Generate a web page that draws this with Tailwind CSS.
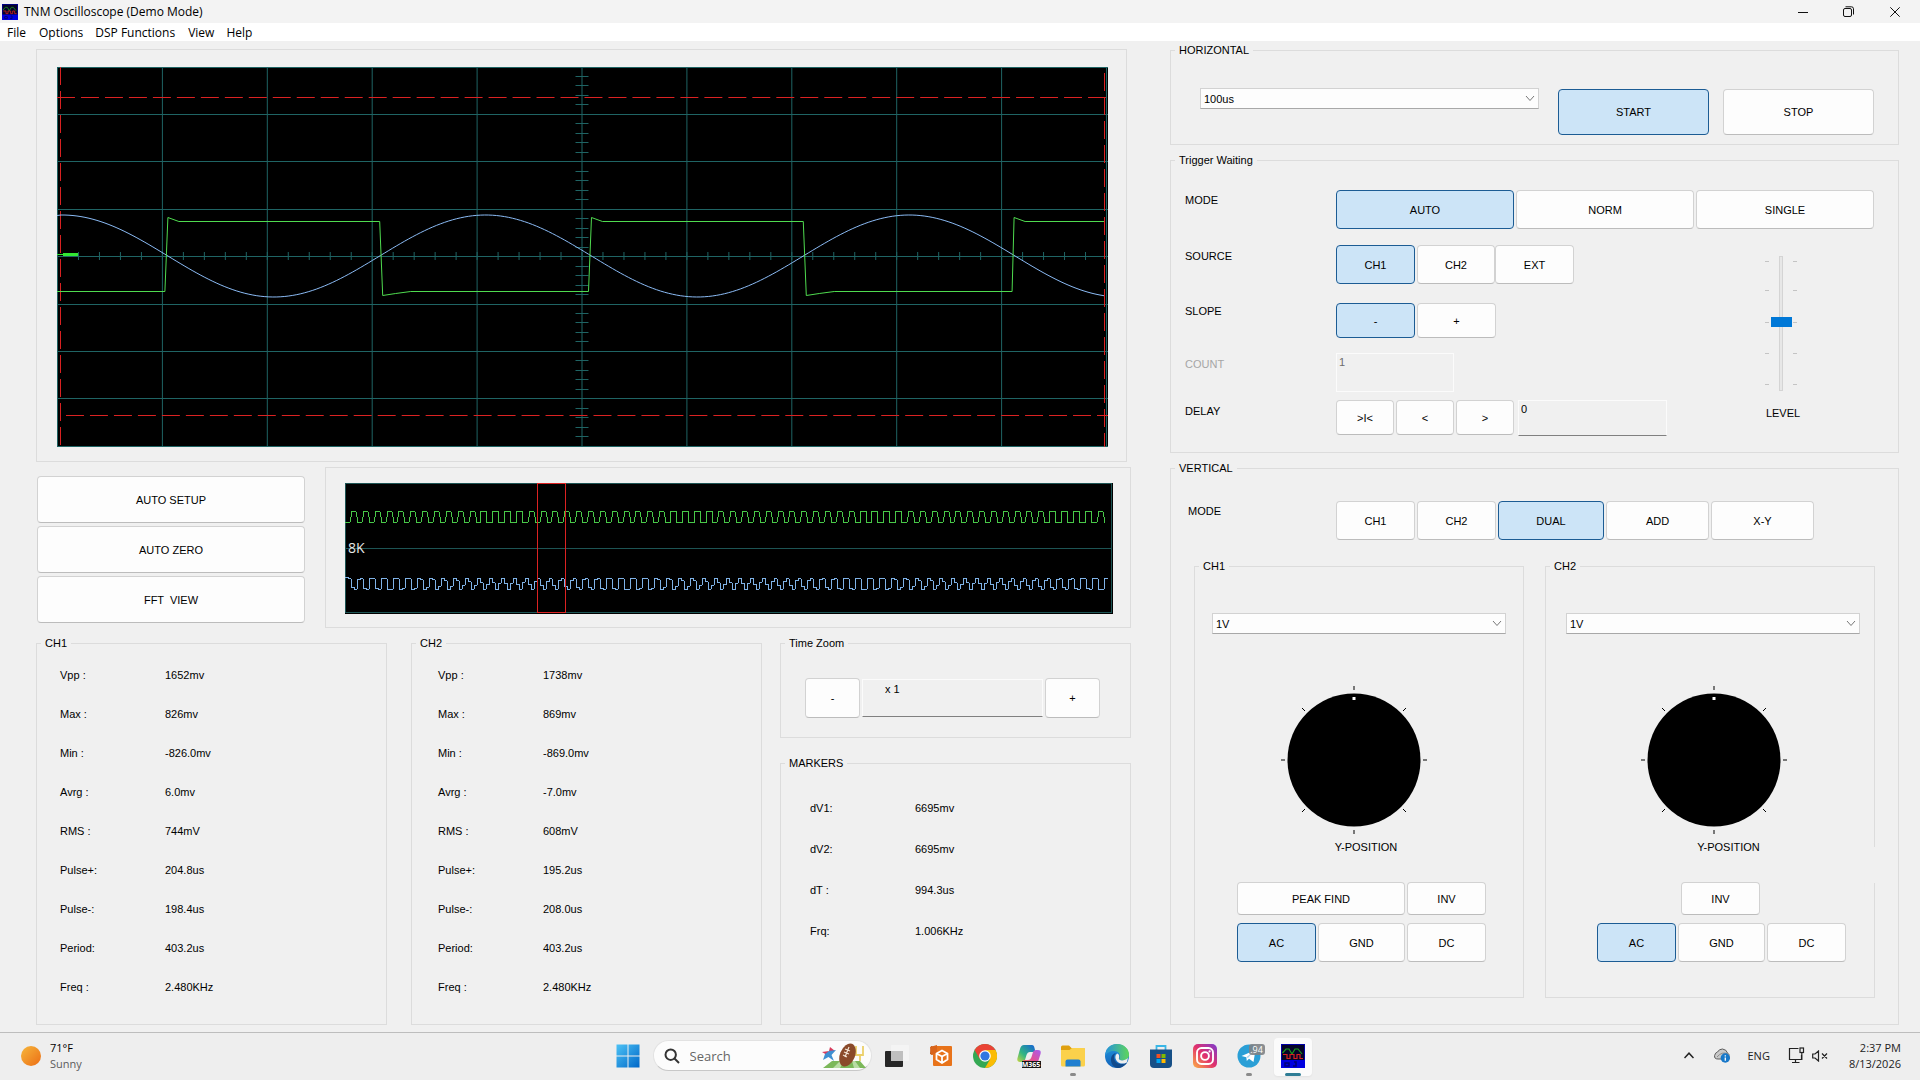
<!DOCTYPE html>
<html lang="en">
<head>
    <meta charset="UTF-8">
    <meta name="viewport" content="width=device-width, initial-scale=1.0">
    <title>TNM Oscilloscope (Demo Mode)</title>
    <!-- Tailwind CSS -->
    <script src="https://cdn.jsdelivr.net/npm/@tailwindcss/browser@4"></script>
</head>
<body class="min-h-screen flex flex-col bg-[#f0f0f0] text-black text-[11px] leading-4 font-['Liberation_Sans',Arial,sans-serif]">

    <!-- Title bar -->
    <header class="h-[23px] shrink-0 flex items-center justify-between bg-[#f3f3f3] px-[2px] font-['Open_Sans',sans-serif]">
        <div class="flex items-center gap-[6px]">
            <svg class="w-4 h-4" viewBox="0 0 24 24"><use href="#scope-logo"/></svg>
            <h1 class="text-[12px]">TNM Oscilloscope (Demo Mode)</h1>
        </div>
        <div class="flex h-full">
            <button aria-label="Minimize" class="w-[46px] flex items-center justify-center">
                <svg class="w-[10px] h-[10px]" viewBox="0 0 10 10" fill="none" stroke="#111"><path d="M0 5.5H10"/></svg>
            </button>
            <button aria-label="Restore" class="w-[45px] flex items-center justify-center">
                <svg class="w-[11px] h-[11px]" viewBox="0 0 11 11" fill="none" stroke="#111"><rect x=".5" y="2.5" width="8" height="8" rx="1.5"/><path d="M2.5 .8H8.5a2 2 0 0 1 2 2V8.5"/></svg>
            </button>
            <button aria-label="Close" class="w-[47px] flex items-center justify-center">
                <svg class="w-[10px] h-[10px]" viewBox="0 0 10 10" fill="none" stroke="#111"><path d="M.3 .3L9.7 9.7M9.7 .3L.3 9.7"/></svg>
            </button>
        </div>
    </header>

    <!-- Menu -->
    <nav class="h-[18px] shrink-0 flex items-end bg-white pl-[7px] text-[12px] font-['Open_Sans',sans-serif]">
        <button class="pr-[13px]">File</button>
        <button class="pr-3">Options</button>
        <button class="pr-[13px]">DSP Functions</button>
        <button class="pr-3">View</button>
        <button>Help</button>
    </nav>

    <main class="flex-1 flex gap-[39px] pl-9 pr-[21px] pb-[7px]">

        <!-- Left side: screens and measurements -->
        <section class="flex-[1095] min-w-0 flex flex-col">
            <div class="mt-2 mr-1 border border-[#dcdcdc] pt-[17px] pb-[14px] pl-5 pr-[18px]">
                <svg id="screen" class="block w-full h-[380px] bg-black" viewBox="0 0 1052 380" preserveAspectRatio="none" fill="none" shape-rendering="crispEdges">
                    <g id="grid" stroke="#1f6464"></g>
                    <g stroke="#dc2222" stroke-dasharray="18 6">
                        <path d="M0 30.5H1052M9 348.5H1052M3.5 0V380M1048.5 6V380"/>
                    </g>
                    <path id="sine" stroke="#8cbcf6"/>
                    <path id="square" stroke="#4fdc4f"/>
                    <path d="M0 187.5H8" stroke="#32e632"/>
                    <path d="M6 187.5H21" stroke="#32e632" stroke-width="3"/>
                </svg>
            </div>

            <div class="mt-[5px] grid grid-cols-[269fr_806fr] gap-5">
                <div class="pt-[9px] pl-px flex flex-col gap-[3px]">
                    <button class="h-[47px] rounded border border-[#d2d2d2] border-b-[#bcbcbc] bg-[#fdfdfd]">AUTO SETUP</button>
                    <button class="h-[47px] rounded border border-[#d2d2d2] border-b-[#bcbcbc] bg-[#fdfdfd]">AUTO ZERO</button>
                    <button class="h-[47px] rounded border border-[#d2d2d2] border-b-[#bcbcbc] bg-[#fdfdfd] whitespace-pre">FFT  VIEW</button>
                </div>
                <div class="border border-[#dcdcdc] pt-[15px] pb-[13px] pl-[19px] pr-[17px]">
                    <div class="relative">
                        <svg class="block w-full h-[131px] bg-black" viewBox="0 0 768 131" preserveAspectRatio="none" fill="none" shape-rendering="crispEdges">
                            <path d="M.5 .5H766.5V129.5H.5ZM0 65.5H766" stroke="#1d5454"/>
                            <path id="overview1" stroke="#48c848"/>
                            <path id="overview2" stroke="#7fb2e6"/>
                            <path d="M192.5 .5H220V129.5H192.5Z" stroke="#dc2222"/>
                        </svg>
                        <span class="absolute left-[3px] top-[57px] text-[14px] text-[#e6e6e6] font-['Open_Sans',sans-serif]">8K</span>
                    </div>
                </div>
            </div>

            <div class="mt-[7px] flex-1 grid grid-cols-[375fr_369fr_351fr]">
                <fieldset class="mr-6 border border-[#dcdcdc] pl-[23px]">
                    <legend class="ml-[-19px] px-1">CH1</legend>
                    <table class="mt-1 text-left">
                        <tr class="h-[39px]"><th class="w-[105px] font-normal">Vpp :</th><td>1652mv</td></tr>
                        <tr class="h-[39px]"><th class="font-normal">Max :</th><td>826mv</td></tr>
                        <tr class="h-[39px]"><th class="font-normal">Min :</th><td>-826.0mv</td></tr>
                        <tr class="h-[39px]"><th class="font-normal">Avrg :</th><td>6.0mv</td></tr>
                        <tr class="h-[39px]"><th class="font-normal">RMS :</th><td>744mV</td></tr>
                        <tr class="h-[39px]"><th class="font-normal">Pulse+:</th><td>204.8us</td></tr>
                        <tr class="h-[39px]"><th class="font-normal">Pulse-:</th><td>198.4us</td></tr>
                        <tr class="h-[39px]"><th class="font-normal">Period:</th><td>403.2us</td></tr>
                        <tr class="h-[39px]"><th class="font-normal">Freq :</th><td>2.480KHz</td></tr>
                    </table>
                </fieldset>
                <fieldset class="mr-[18px] border border-[#dcdcdc] pl-[26px]">
                    <legend class="ml-[-22px] px-1">CH2</legend>
                    <table class="mt-1 text-left">
                        <tr class="h-[39px]"><th class="w-[105px] font-normal">Vpp :</th><td>1738mv</td></tr>
                        <tr class="h-[39px]"><th class="font-normal">Max :</th><td>869mv</td></tr>
                        <tr class="h-[39px]"><th class="font-normal">Min :</th><td>-869.0mv</td></tr>
                        <tr class="h-[39px]"><th class="font-normal">Avrg :</th><td>-7.0mv</td></tr>
                        <tr class="h-[39px]"><th class="font-normal">RMS :</th><td>608mV</td></tr>
                        <tr class="h-[39px]"><th class="font-normal">Pulse+:</th><td>195.2us</td></tr>
                        <tr class="h-[39px]"><th class="font-normal">Pulse-:</th><td>208.0us</td></tr>
                        <tr class="h-[39px]"><th class="font-normal">Period:</th><td>403.2us</td></tr>
                        <tr class="h-[39px]"><th class="font-normal">Freq :</th><td>2.480KHz</td></tr>
                    </table>
                </fieldset>
                <div class="flex flex-col gap-[17px]">
                    <fieldset class="border border-[#dcdcdc] pl-6 pr-[30px] pb-[19px]">
                        <legend class="ml-[-20px] px-1">Time Zoom</legend>
                        <div class="mt-[27px] flex items-center gap-[2px]">
                            <button class="w-[55px] h-10 rounded border border-[#d2d2d2] border-b-[#bcbcbc] bg-[#fdfdfd]">-</button>
                            <input aria-label="Time Zoom" value="x 1" readonly class="flex-1 min-w-0 h-[38px] pl-[22px] pb-[18px] border border-[#fbfbfb] border-b-[#808080]">
                            <button class="w-[55px] h-10 rounded border border-[#d2d2d2] border-b-[#bcbcbc] bg-[#fdfdfd]">+</button>
                        </div>
                    </fieldset>
                    <fieldset class="flex-1 border border-[#dcdcdc] pl-[29px]">
                        <legend class="ml-[-25px] px-1">MARKERS</legend>
                        <table class="mt-4 text-left">
                            <tr class="h-[41px]"><th class="w-[105px] font-normal">dV1:</th><td>6695mv</td></tr>
                            <tr class="h-[41px]"><th class="font-normal">dV2:</th><td>6695mv</td></tr>
                            <tr class="h-[41px]"><th class="font-normal">dT :</th><td>994.3us</td></tr>
                            <tr class="h-[41px]"><th class="font-normal">Frq:</th><td>1.006KHz</td></tr>
                        </table>
                    </fieldset>
                </div>
            </div>
        </section>

        <!-- Right side: controls -->
        <section class="flex-[729] min-w-0 flex flex-col gap-[7px] pt-px">

            <fieldset class="border border-[#dcdcdc] pl-[29px] pr-6 pb-[9px]">
                <legend class="ml-[-25px] px-1">HORIZONTAL</legend>
                <div class="mt-[30px] flex items-start">
                    <div class="relative flex-1 mr-[19px]">
                        <select aria-label="Time base" class="block w-full h-[21px] pl-[3px] appearance-none border border-[#d2d2d2] border-b-[#a8a8a8] bg-[#fdfdfd]"><option>100us</option></select>
                        <svg class="absolute right-1 top-[7px] w-[10px] h-[7px] pointer-events-none" viewBox="0 0 10 7" fill="none" stroke="#777"><path d="M1 1L5 5.5L9 1"/></svg>
                    </div>
                    <button class="mt-px w-[151px] h-[46px] rounded border border-[#1c5c94] bg-[#cce4f7] mr-[14px]">START</button>
                    <button class="mt-px w-[151px] h-[46px] rounded border border-[#d2d2d2] border-b-[#bcbcbc] bg-[#fdfdfd]">STOP</button>
                </div>
            </fieldset>

            <fieldset class="border border-[#dcdcdc] pl-[14px] pr-6 pb-4">
                <legend class="ml-[-10px] px-1">Trigger Waiting</legend>
                <div class="mt-[22px] flex">
                    <span class="w-[151px] pt-[2px]">MODE</span>
                    <div class="flex-1 flex gap-[2px]">
                        <button class="flex-1 h-[39px] rounded border border-[#1c5c94] bg-[#cce4f7]">AUTO</button>
                        <button class="flex-1 h-[39px] rounded border border-[#d2d2d2] border-b-[#bcbcbc] bg-[#fdfdfd]">NORM</button>
                        <button class="flex-1 h-[39px] rounded border border-[#d2d2d2] border-b-[#bcbcbc] bg-[#fdfdfd]">SINGLE</button>
                    </div>
                </div>
                <div class="flex justify-between">
                    <div class="mt-4">
                        <div class="flex">
                            <span class="w-[151px] pt-[3px]">SOURCE</span>
                            <button class="w-[79px] h-[39px] rounded border border-[#1c5c94] bg-[#cce4f7] mr-[2px]">CH1</button>
                            <button class="w-[78px] h-[39px] rounded border border-[#d2d2d2] border-b-[#bcbcbc] bg-[#fdfdfd]">CH2</button>
                            <button class="w-[79px] h-[39px] rounded border border-[#d2d2d2] border-b-[#bcbcbc] bg-[#fdfdfd]">EXT</button>
                        </div>
                        <div class="mt-[19px] flex">
                            <span class="w-[151px]">SLOPE</span>
                            <button class="w-[79px] h-[35px] rounded border border-[#1c5c94] bg-[#cce4f7] mr-[2px]">-</button>
                            <button class="w-[79px] h-[35px] rounded border border-[#d2d2d2] border-b-[#bcbcbc] bg-[#fdfdfd]">+</button>
                        </div>
                        <div class="mt-[15px] flex text-[#a6a6a6]">
                            <label for="count" class="w-[151px] pt-[3px]">COUNT</label>
                            <input id="count" value="1" disabled class="w-[118px] h-[39px] pl-[2px] pb-[21px] border border-[#fbfbfb] text-[#6d6d6d]">
                        </div>
                        <div class="mt-2 flex">
                            <label for="delay" class="w-[151px] pt-[3px]">DELAY</label>
                            <button class="w-[58px] h-[35px] rounded border border-[#d2d2d2] border-b-[#bcbcbc] bg-[#fdfdfd] mr-[2px]">&gt;I&lt;</button>
                            <button class="w-[58px] h-[35px] rounded border border-[#d2d2d2] border-b-[#bcbcbc] bg-[#fdfdfd] mr-[2px]">&lt;</button>
                            <button class="w-[58px] h-[35px] rounded border border-[#d2d2d2] border-b-[#bcbcbc] bg-[#fdfdfd] mr-1">&gt;</button>
                            <input id="delay" value="0" readonly class="w-[149px] h-9 pl-[2px] pb-[18px] border border-[#fbfbfb] border-b-[#808080]">
                        </div>
                    </div>
                    <!-- Level slider with scale on both sides -->
                    <div class="mt-[27px] mr-[75px] w-9 flex flex-col items-center gap-[14px]">
                        <div class="relative w-9 h-[135px] flex justify-center">
                            <svg class="absolute inset-0 w-9 h-[135px]" viewBox="0 0 36 135" fill="none" shape-rendering="crispEdges">
                                <rect x="16.5" y=".5" width="3" height="134" fill="#e7e7e7" stroke="#d4d4d4"/>
                                <path d="M2 5.5H6M30 5.5H34M2 34.5H6M30 34.5H34M2 66.5H6M30 66.5H34M2 97.5H6M30 97.5H34M2 128.5H6M30 128.5H34" stroke="#c4c4c4"/>
                            </svg>
                            <input id="level" type="range" min="0" max="100" value="51" class="relative w-[21px] h-[135px] appearance-none bg-transparent [writing-mode:vertical-lr] [direction:rtl] [&::-webkit-slider-thumb]:appearance-none [&::-webkit-slider-thumb]:w-[21px] [&::-webkit-slider-thumb]:h-[10px] [&::-webkit-slider-thumb]:bg-[#0078d7]">
                        </div>
                        <label for="level" class="pl-1">LEVEL</label>
                    </div>
                </div>
            </fieldset>

            <fieldset class="flex-1 flex flex-col border border-[#dcdcdc] px-[23px] pb-[26px]">
                <legend class="ml-[-19px] px-1">VERTICAL</legend>
                <div class="mt-[25px] ml-[-6px] flex">
                    <span class="w-[148px] pt-[2px]">MODE</span>
                    <button class="w-[79px] h-[39px] rounded border border-[#d2d2d2] border-b-[#bcbcbc] bg-[#fdfdfd] mr-[2px]">CH1</button>
                    <button class="w-[79px] h-[39px] rounded border border-[#d2d2d2] border-b-[#bcbcbc] bg-[#fdfdfd] mr-[2px]">CH2</button>
                    <button class="w-[106px] h-[39px] rounded border border-[#1c5c94] bg-[#cce4f7] mr-[2px]">DUAL</button>
                    <button class="w-[103px] h-[39px] rounded border border-[#d2d2d2] border-b-[#bcbcbc] bg-[#fdfdfd] mr-[2px]">ADD</button>
                    <button class="w-[103px] h-[39px] rounded border border-[#d2d2d2] border-b-[#bcbcbc] bg-[#fdfdfd]">X-Y</button>
                </div>

                <div class="mt-[18px] flex-1 grid grid-cols-2 gap-[21px]">
                    <fieldset class="border border-[#dcdcdc] px-[17px]">
                        <legend class="ml-[-13px] px-1">CH1</legend>
                        <div class="relative mt-[39px]">
                            <select aria-label="CH1 volts per division" class="block w-full h-[21px] pl-[3px] appearance-none border border-[#d2d2d2] border-b-[#a8a8a8] bg-[#fdfdfd]"><option>1V</option></select>
                            <svg class="absolute right-1 top-[7px] w-[10px] h-[7px] pointer-events-none" viewBox="0 0 10 7" fill="none" stroke="#777"><path d="M1 1L5 5.5L9 1"/></svg>
                        </div>
                        <div class="mt-[52px] ml-[25px] w-[249px]">
                            <svg class="block ml-[43px] w-[148px] h-[148px]" viewBox="0 0 148 148"><use href="#knob"/></svg>
                            <p class="pt-[5px] pl-[9px] text-center">Y-POSITION</p>
                            <div class="mt-[27px] flex gap-[2px]">
                                <button class="flex-1 h-[33px] rounded border border-[#d2d2d2] border-b-[#bcbcbc] bg-[#fdfdfd]">PEAK FIND</button>
                                <button class="w-[79px] h-[33px] rounded border border-[#d2d2d2] border-b-[#bcbcbc] bg-[#fdfdfd]">INV</button>
                            </div>
                            <div class="mt-2 flex gap-[2px]">
                                <button class="w-[79px] h-[39px] rounded border border-[#1c5c94] bg-[#cce4f7]">AC</button>
                                <button class="flex-1 h-[39px] rounded border border-[#d2d2d2] border-b-[#bcbcbc] bg-[#fdfdfd]">GND</button>
                                <button class="w-[79px] h-[39px] rounded border border-[#d2d2d2] border-b-[#bcbcbc] bg-[#fdfdfd]">DC</button>
                            </div>
                        </div>
                    </fieldset>
                    <fieldset class="relative border border-[#dcdcdc] pl-5 pr-[14px]">
                        <legend class="ml-[-16px] px-1">CH2</legend>
                        <span class="absolute right-[-1px] top-[273px] w-px h-9 bg-[#f0f0f0]"></span>
                        <div class="relative mt-[39px]">
                            <select aria-label="CH2 volts per division" class="block w-full h-[21px] pl-[3px] appearance-none border border-[#d2d2d2] border-b-[#a8a8a8] bg-[#fdfdfd]"><option>1V</option></select>
                            <svg class="absolute right-1 top-[7px] w-[10px] h-[7px] pointer-events-none" viewBox="0 0 10 7" fill="none" stroke="#777"><path d="M1 1L5 5.5L9 1"/></svg>
                        </div>
                        <div class="mt-[52px] ml-[31px] w-[249px]">
                            <svg class="block ml-[43px] w-[148px] h-[148px]" viewBox="0 0 148 148"><use href="#knob"/></svg>
                            <p class="pt-[5px] pl-[14px] text-center">Y-POSITION</p>
                            <button class="mt-[27px] ml-[84px] w-[79px] h-[33px] block rounded border border-[#d2d2d2] border-b-[#bcbcbc] bg-[#fdfdfd]">INV</button>
                            <div class="mt-2 flex gap-[2px]">
                                <button class="w-[79px] h-[39px] rounded border border-[#1c5c94] bg-[#cce4f7]">AC</button>
                                <button class="flex-1 h-[39px] rounded border border-[#d2d2d2] border-b-[#bcbcbc] bg-[#fdfdfd]">GND</button>
                                <button class="w-[79px] h-[39px] rounded border border-[#d2d2d2] border-b-[#bcbcbc] bg-[#fdfdfd]">DC</button>
                            </div>
                        </div>
                    </fieldset>
                </div>
            </fieldset>
        </section>
    </main>

    <!-- Taskbar -->
    <footer class="h-12 shrink-0 grid grid-cols-[1fr_auto_1fr] items-center border-t border-[#bdbdbd] bg-[#eeeeee] pb-[2px] font-['Open_Sans',sans-serif]">
        <button class="flex items-center gap-[9px] pl-[21px] text-left">
            <svg class="w-5 h-5" viewBox="0 0 20 20"><circle cx="10" cy="10" r="10" fill="url(#sun)"/></svg>
            <span>71°F<br><span class="text-[#5c5c5c]">Sunny</span></span>
        </button>

        <div class="flex items-center">
            <button aria-label="Start" class="w-11 h-11 flex items-center justify-center">
                <svg class="w-6 h-6" viewBox="0 0 24 24" fill="url(#win)"><path d="M.5 .5H11.5V11.5H.5ZM12.5 .5H23.5V11.5H12.5ZM.5 12.5H11.5V23.5H.5ZM12.5 12.5H23.5V23.5H12.5Z"/></svg>
            </button>
            <div class="mx-[3px] w-[219px] h-[31px] flex items-center rounded-full border border-[#e2e2e2] border-b-[#c8c8c8] bg-[#fcfcfc] pl-[10px] pr-1">
                <svg class="w-4 h-4 shrink-0" viewBox="0 0 16 16" fill="none" stroke="#333" stroke-width="2"><circle cx="6.7" cy="6.7" r="5.2"/><path d="M10.5 10.5L15 15"/></svg>
                <input type="search" aria-label="Search" placeholder="Search" class="ml-[10px] flex-1 min-w-0 text-[13px] placeholder:text-[#666] outline-none">
                <svg class="w-12 h-[27px] shrink-0" viewBox="0 0 48 27">
                    <path d="M4 26L13 19H41L47 26Z" fill="#7cb85a"/>
                    <path d="M14 26L21 19H25L21 26ZM35 26L33 19H36L41 26Z" fill="#b9dca4"/>
                    <path d="M41 19V13M37 4V13H44V4" fill="none" stroke="#ecd06a" stroke-width="1.8"/>
                    <path d="M8 2L10 9L3 10L8 13L10 9L16 9L11 5L10 9Z" fill="#d63b5c"/>
                    <path d="M10 9L17 8L12.5 13L15 19L9.5 15L4 18L6 12Z" fill="#3f8fd2"/>
                    <ellipse cx="28.5" cy="13" rx="7.5" ry="12" fill="#8a4a2a" transform="rotate(22 28.5 13)"/>
                    <path d="M30 5L26 15M26 7L31 9M25 10L30 12M24 13L28 15" fill="none" stroke="#f3e3d3" stroke-width="1.2"/>
                </svg>
            </div>
            <button aria-label="Task view" class="w-11 h-11 flex items-center justify-center">
                <svg class="w-6 h-6" viewBox="0 0 24 24"><rect x="0" y="7" width="18" height="16" rx="1" fill="#272727"/><rect x="6" y="1" width="18" height="16" rx="1" fill="#f4f4f4"/><rect x="6" y="7" width="12" height="10" fill="#bfbfbf"/></svg>
            </button>
            <button aria-label="Package manager" class="w-11 h-11 flex items-center justify-center">
                <svg class="w-6 h-6" viewBox="0 0 24 24"><path d="M2 2L9 4V12L1 10Z" fill="#b5500f"/><rect x="4" y="2" width="19" height="20" rx="1" fill="#e8731a"/><path d="M1 3L8 1V9L2 11Z" fill="#d9641a"/><path d="M13 6.5L18.5 9.5V15.5L13 19L7.500 15.5V9.5ZM7.500 9.5L13 12.500L18.5 9.5M13 12.500V19" fill="none" stroke="#fff" stroke-width="1.800" stroke-linejoin="round"/></svg>
            </button>
            <button aria-label="Chrome" class="w-11 h-11 flex items-center justify-center">
                <svg class="w-6 h-6" viewBox="0 0 24 24"><circle cx="12" cy="12" r="12" fill="#34a853"/><path d="M12 12L1.6 6A12 12 0 0 1 22.4 6Z" fill="#ea4335"/><path d="M12 6H22.4A12 12 0 0 1 12 24L17.2 15Z" fill="#fbbc05"/><path d="M1.6 6L6.8 15L12 6Z" fill="#ea4335"/><circle cx="12" cy="12" r="5.8" fill="#fff"/><circle cx="12" cy="12" r="4.6" fill="#3277e0"/></svg>
            </button>
            <button aria-label="Microsoft 365 Copilot" class="relative w-11 h-11 flex items-center justify-center">
                <svg class="w-6 h-6" viewBox="0 0 24 24"><path d="M7 1H15Q17 1 17.5 4L18.5 8H13Q10.5 8 9.5 11L8 16Q7 18 5 18H3Q-.5 18 .5 14L3 5Q4 1 7 1Z" fill="url(#copA)"/><path d="M17 22H9Q7 22 6.5 19L6 16H11Q13.5 16 14.5 13L16 8Q17 6 19 6H21Q24.5 6 23.5 10L21 18Q20 22 17 22Z" fill="url(#copB)"/></svg>
                <span class="absolute left-[15px] top-[27px] w-[19px] h-[7px] bg-[#151515] text-white text-[7px] leading-[7px] font-bold text-center">M365</span>
            </button>
            <button aria-label="File Explorer" class="relative w-11 h-11 flex items-center justify-center">
                <svg class="w-6 h-6" viewBox="0 0 24 24"><path d="M0 3Q0 1.5 1.5 1.5H8L10.5 4H22.5Q24 4 24 5.5V10H0Z" fill="#dfa010"/><path d="M0 6H8.5L11 4H23Q24 4 24 5.5V21Q24 22.5 22.5 22.5H1.5Q0 22.5 0 21Z" fill="#fbd14b"/><path d="M4.5 22.5V17.5Q4.5 15.5 6.5 15.5H17.5Q19.5 15.5 19.5 17.5V22.5Z" fill="#1f7fd0"/></svg>
                <span class="absolute bottom-[2px] w-[6px] h-[3px] rounded-full bg-[#8a8a8a]"></span>
            </button>
            <button aria-label="Edge" class="w-11 h-11 flex items-center justify-center">
                <svg class="w-6 h-6" viewBox="0 0 24 24"><circle cx="12" cy="12" r="12" fill="url(#edgeB)"/><path d="M.3 10.5C1 4 6 0 12 0C19 0 24 5 24 10.5C24 14 21.5 16.5 18 16.5C15 16.5 13.7 15.3 14.5 14C16 11 14 7 9 7C5 7 1.5 9 .3 12Z" fill="url(#edgeA)"/><path d="M11 9C8 11 8 17 13 19.5C16.5 21 20 19.5 22 18.5C20 22 16 24 12.5 24C6 23 4 14 8 10.5C9 9.5 10 9 11 9Z" fill="#114a8b"/><path d="M12.5 9.5C15.5 11 13.5 14.5 14 15C14.5 17 20 17 23 14C22.5 16 22 18 21.5 18.7C15 21.5 9.5 17 10.5 12C10.8 10.8 11.5 10 12.5 9.5Z" fill="#eee"/></svg>
            </button>
            <button aria-label="Microsoft Store" class="w-11 h-11 flex items-center justify-center">
                <svg class="w-6 h-6" viewBox="0 0 24 24"><path d="M7.5 6V2H16.5V6" fill="none" stroke="#39b6e6" stroke-width="1.8"/><path d="M1 5.5H23V20Q23 24 19 24H5Q1 24 1 20Z" fill="#164f86"/><path d="M7.5 10H11.5V14H7.5Z" fill="#f25022"/><path d="M12.5 10H16.5V14H12.5Z" fill="#7fba00"/><path d="M7.5 15H11.5V19H7.5Z" fill="#00a4ef"/><path d="M12.5 15H16.5V19H12.5Z" fill="#ffb900"/></svg>
            </button>
            <button aria-label="Instagram" class="w-11 h-11 flex items-center justify-center">
                <svg class="w-6 h-6" viewBox="0 0 24 24"><rect width="24" height="24" rx="5" fill="url(#insta)"/><g fill="none" stroke="#fff" stroke-width="1.9"><rect x="4" y="4" width="16" height="16" rx="4.5"/><circle cx="12" cy="12" r="3.9"/></g><circle cx="16.6" cy="7.4" r="1.1" fill="#fff"/></svg>
            </button>
            <button aria-label="Telegram" class="relative w-11 h-11 flex items-center justify-center">
                <svg class="w-6 h-6" viewBox="0 0 24 24"><circle cx="12" cy="12" r="11.5" fill="#2a9fd6"/><path d="M4.5 12L18.5 6L16.5 18L12 14.7L9.8 17L9.3 13.2Z" fill="#fff"/><path d="M9.3 13.2L16 8L11 14Z" fill="#a9d4ee"/></svg>
                <span class="absolute left-[22px] top-[10px] w-4 h-[11px] rounded-[3px] bg-[#7d8286]/90 text-white text-[9px] leading-[11px] text-center">.94</span>
                <span class="absolute bottom-[2px] w-[6px] h-[3px] rounded-full bg-[#8a8a8a]"></span>
            </button>
            <button aria-label="TNM Oscilloscope" class="relative w-11 h-11 flex items-center justify-center">
                <span class="absolute inset-x-[3px] top-1 bottom-[2px] rounded bg-[#fbfbfb] shadow-xs"></span>
                <svg class="relative w-6 h-6" viewBox="0 0 24 24"><use href="#scope-logo"/></svg>
                <span class="absolute bottom-[2px] w-4 h-[3px] rounded-full bg-[#2f7d95]"></span>
            </button>
        </div>

        <div class="flex items-center justify-end pr-[19px]">
            <button aria-label="Show hidden icons" class="mr-5">
                <svg class="w-[10px] h-[7px]" viewBox="0 0 10 7" fill="none" stroke="#222" stroke-width="1.5"><path d="M.5 6L5 1.2L9.5 6"/></svg>
            </button>
            <button aria-label="OneDrive" class="mr-[17px]">
                <svg class="block w-4 h-[15px]" viewBox="0 0 16 15"><path d="M4 11Q0 11 .6 7.5Q1.2 4.5 3.5 4Q5 1 8.5 1Q12.5 1.5 13.5 5Q15.5 6 15 9V11Z" fill="#c9c9c9" stroke="#5c5c5c"/><path d="M3 9Q8 3 14 6" fill="none" stroke="#8c8c8c"/><circle cx="11.3" cy="10" r="4.7" fill="#1878c9"/><path d="M11.3 9.5V12.7M11.3 7.3V8.5" stroke="#fff" stroke-width="1.3"/></svg>
            </button>
            <button class="mr-[18px] text-[#222]">ENG</button>
            <button aria-label="Network and volume" class="mr-[21px] flex items-center gap-[7px]">
                <svg class="w-[17px] h-[17px]" viewBox="0 0 17 17" fill="none" stroke="#222" stroke-width="1.2"><path d="M10.5 1.5H1.5V12.5H13.5V8M7.5 12.5V15.5M4 15.5H11.5"/><rect x="12" y="1" width="3.5" height="4.5"/><path d="M13.8 5.5V13"/></svg>
                <svg class="w-4 h-3" viewBox="0 0 16 12" fill="none" stroke="#222" stroke-width="1.2"><path d="M.7 4H3L6.5 1V11L3 8H.7ZM10 3.5L15 8.5M15 3.5L10 8.5"/></svg>
            </button>
            <time class="text-right text-[#222]">2:37 PM<br>8/13/2026</time>
        </div>
    </footer>

    <!-- Shared drawings and gradients -->
    <svg class="absolute w-0 h-0" aria-hidden="true">
        <defs>
            <symbol id="scope-logo" viewBox="0 0 24 24">
                <rect width="24" height="24" fill="#0000a8"/>
                <rect x="1" y="1" width="22" height="15" fill="#050528"/>
                <path d="M1.5 9L5 5H8L11 10L14 5H17L21 10" fill="none" stroke="#1c9a1c" stroke-width="1.2"/>
                <path d="M2 10.5H6V14.5H9V10.5H13V14.5H16V10.5H19V14.5H22" fill="none" stroke="#d82020" stroke-width="1.2"/>
                <rect x="0" y="16" width="24" height="8" fill="#0000e0"/>
                <path d="M4 19H8V22H4ZM13 18H15V22H12" fill="none" stroke="#000078" stroke-width="1.5"/>
            </symbol>
            <symbol id="knob" viewBox="0 0 148 148">
                <circle cx="74" cy="74" r="66.5"/>
                <rect x="72.5" y="11" width="3" height="3" fill="#fff"/>
                <path d="M74 0V4M74 144V148M1 74H5M143 74H147M22 22L25 25M126 22L123 25M22 126L25 123M126 126L123 123" stroke="#000"/>
            </symbol>
            <linearGradient id="sun" x1="0" y1="0" x2="1" y2="1"><stop offset="0" stop-color="#f6b73c"/><stop offset="1" stop-color="#ec6d14"/></linearGradient>
            <linearGradient id="win" x1="0" y1="0" x2="1" y2="1"><stop offset="0" stop-color="#4cc2f5"/><stop offset="1" stop-color="#0067c8"/></linearGradient>
            <linearGradient id="copA" x1="0" y1="1" x2="1" y2="0"><stop offset="0" stop-color="#c9d640"/><stop offset=".4" stop-color="#2fb583"/><stop offset="1" stop-color="#1560d8"/></linearGradient>
            <linearGradient id="copB" x1="0" y1="1" x2="1" y2="0"><stop offset="0" stop-color="#f0874a"/><stop offset=".5" stop-color="#e04f9a"/><stop offset="1" stop-color="#a65cf0"/></linearGradient>
            <linearGradient id="edgeA" x1="0" y1="0" x2="1" y2="0"><stop offset="0" stop-color="#2492dc"/><stop offset="1" stop-color="#5fd65a"/></linearGradient>
            <linearGradient id="edgeB" x1="0" y1="0" x2="0" y2="1"><stop offset="0" stop-color="#2196e0"/><stop offset="1" stop-color="#1262b8"/></linearGradient>
            <linearGradient id="insta" x1="0" y1="1" x2="1" y2="0"><stop offset="0" stop-color="#fcb045"/><stop offset=".5" stop-color="#e1306c"/><stop offset="1" stop-color="#7a3bd0"/></linearGradient>
        </defs>
    </svg>

    <script>
        // Grid: 10 x 8 divisions, ticks at every fifth on the axes
        let lines = "";
        for (let i = 0; i <= 10; i++) lines += `M${Math.min(i * 105, 1051) + 0.5} 0V380`;
        for (let i = 0; i <= 8; i++) lines += `M0 ${Math.floor(i * 47.4) + 0.5}H1052`;
        for (let i = 1; i < 50; i++) lines += `M${i * 21 + 0.5} 185V193`;
        for (let i = 1; i < 40; i++) lines += `M519 ${Math.floor(i * 9.48) + 0.5}H532`;
        document.getElementById("grid").innerHTML = `<path d="${lines}"/>`;

        // CH2 sine on the main screen
        let sine = "M0 148.5";
        for (let x = 4; x <= 1048; x += 4) {
            sine += `L${x} ${189 - 41 * Math.cos((2 * Math.PI * (x - 5)) / 424)}`;
        }
        document.getElementById("sine").setAttribute("d", sine);

        // CH1 square wave with a small overshoot on each edge
        let square = "M0 224.5H108";
        [108, 532, 955].forEach((x) => {
            square += `L${x + 3} 150.5L${x + 14} 154.5`;
            if (x < 900) square += `H${x + 215}L${x + 218} 228.5L${x + 231} 226.5L${x + 246} 224.5H${x + 424}`;
            else square += "H1048";
        });
        document.getElementById("square").setAttribute("d", square);

        // Whole record, both channels
        const period = 11.85;
        let over1 = "M0 39.5";
        for (let n = 0; n * period < 758; n++) {
            const x = Math.round(n * period);
            const slant = n % 16 > 10 && n % 16 < 15 ? 0 : 2;
            over1 += `H${x + 5}L${x + 5 + slant} 28.5H${x + 11}L${x + 11 + slant} 39.5`;
        }
        document.getElementById("overview1").setAttribute("d", over1);

        let over2 = "M0 94.5";
        for (let x = 3; x <= 764; x += 3) {
            const v = 8 * Math.cos((2 * Math.PI * (x - 2)) / period);
            over2 += `H${x}L${x + 1} ${Math.round(100 - Math.max(-5.5, Math.min(5.5, v))) + 0.5}`;
        }
        document.getElementById("overview2").setAttribute("d", over2);
    </script>
</body>
</html>
